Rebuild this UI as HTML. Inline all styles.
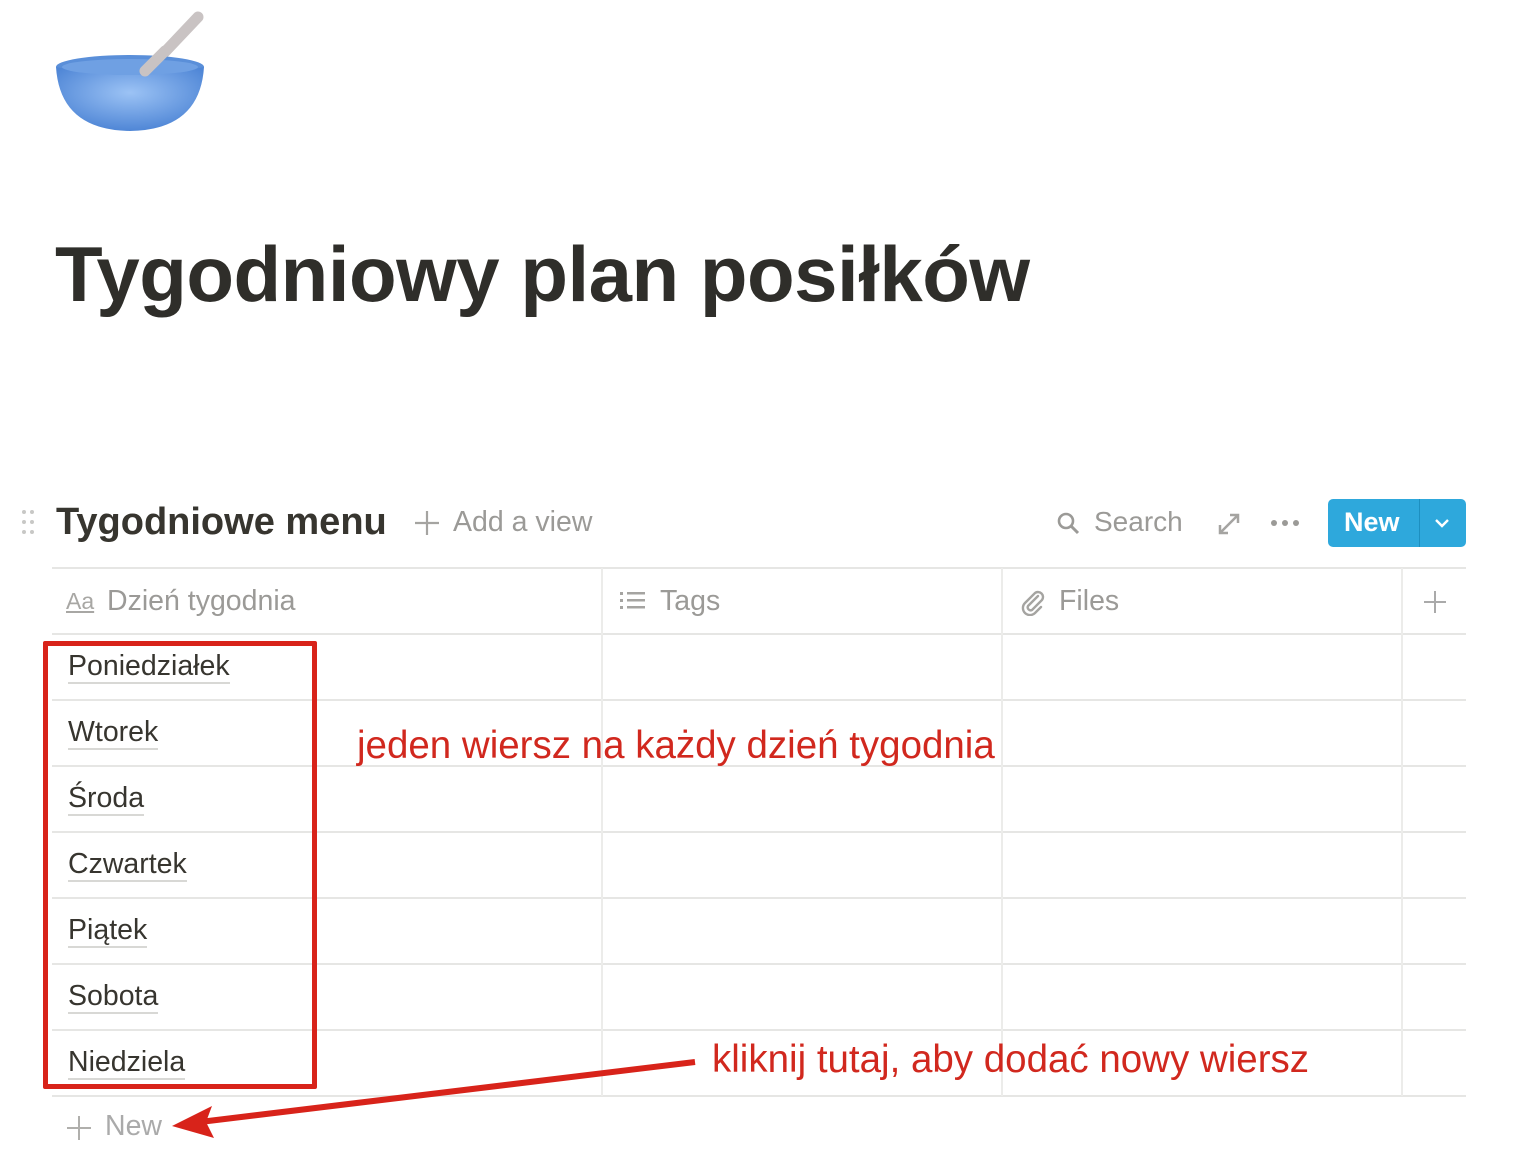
<!DOCTYPE html>
<html><head><meta charset="utf-8"><style>
body{margin:0;width:1524px;height:1154px;background:#fff;font-family:"Liberation Sans",sans-serif;position:relative;overflow:hidden;color:#37352f}
.a{position:absolute;white-space:nowrap}
.hl{position:absolute;left:52px;width:1414px;height:2px;background:#e6e6e4}
.vl{position:absolute;width:2px;background:#ececea;top:568px;height:528px}
.day{position:absolute;left:68px;font-size:28.5px;color:#37352f;border-bottom:2px solid #d8d8d5;line-height:31px}
.gray{color:#9b9a97}
.red{color:#d1281e}
</style></head><body>
<svg class="a" style="left:50px;top:5px" width="160" height="130" viewBox="0 0 160 130">
<defs><radialGradient id="g" cx="50%" cy="40%" r="60%"><stop offset="0" stop-color="#9cc3f5"/><stop offset="1" stop-color="#4f86d6"/></radialGradient></defs>
<line x1="95" y1="68" x2="148" y2="12" stroke="#c9c3c3" stroke-width="11" stroke-linecap="round"/>
<ellipse cx="80" cy="62" rx="74" ry="12" fill="#5a8fd9"/>
<path d="M6 62 Q10 125 80 126 Q150 125 154 62 Q80 78 6 62Z" fill="url(#g)"/>
<ellipse cx="80" cy="62" rx="68" ry="8" fill="#6fa0e3"/>
<line x1="95" y1="66" x2="115" y2="46" stroke="#c9c3c3" stroke-width="11" stroke-linecap="round"/>
</svg>
<div class="a" style="left:55px;top:229px;font-size:78px;font-weight:bold;letter-spacing:-0.5px;color:#2f2e2a">Tygodniowy plan posiłków</div>
<svg class="a" style="left:20px;top:509px" width="16" height="28"><g fill="#c8c8c6"><circle cx="4" cy="3" r="2"/><circle cx="12" cy="3" r="2"/><circle cx="4" cy="13" r="2"/><circle cx="12" cy="13" r="2"/><circle cx="4" cy="23" r="2"/><circle cx="12" cy="23" r="2"/></g></svg>
<div class="a" style="left:56px;top:501px;font-size:38px;font-weight:bold;color:#37352f">Tygodniowe menu</div>
<svg class="a" style="left:414px;top:510px" width="26" height="26"><path d="M13 1v24M1 13h24" stroke="#a5a4a1" stroke-width="2.2"/></svg>
<div class="a gray" style="left:453px;top:506px;font-size:28.5px">Add a view</div>
<svg class="a" style="left:1056px;top:511px" width="26" height="26"><circle cx="10" cy="10" r="7" fill="none" stroke="#9b9a97" stroke-width="2.6"/><line x1="15" y1="15" x2="22" y2="22" stroke="#9b9a97" stroke-width="3"/></svg>
<div class="a gray" style="left:1094px;top:506px;font-size:28px">Search</div>
<svg class="a" style="left:1217px;top:512px" width="24" height="24"><path d="M3 21L21 3M13 3h8v8M3 13v8h8" fill="none" stroke="#a5a4a1" stroke-width="2.5"/></svg>
<svg class="a" style="left:1270px;top:519px" width="30" height="8"><g fill="#9b9a97"><circle cx="4" cy="4" r="3"/><circle cx="15" cy="4" r="3"/><circle cx="26" cy="4" r="3"/></g></svg>
<div class="a" style="left:1328px;top:499px;width:138px;height:48px;background:#2ea8dc;border-radius:5px"></div>
<div class="a" style="left:1419px;top:499px;width:1px;height:48px;background:#1d8fc0"></div>
<div class="a" style="left:1344px;top:507px;font-size:27px;font-weight:bold;color:#fff">New</div>
<svg class="a" style="left:1434px;top:517px" width="16" height="12"><path d="M2 3l6 6 6-6" fill="none" stroke="#fff" stroke-width="2.4"/></svg>
<div class="hl" style="top:567px"></div>
<div class="hl" style="top:633px"></div>
<div class="hl" style="top:699px"></div>
<div class="hl" style="top:765px"></div>
<div class="hl" style="top:831px"></div>
<div class="hl" style="top:897px"></div>
<div class="hl" style="top:963px"></div>
<div class="hl" style="top:1029px"></div>
<div class="hl" style="top:1095px"></div>
<div class="vl" style="left:601px"></div>
<div class="vl" style="left:1001px"></div>
<div class="vl" style="left:1401px"></div>
<div class="a gray" style="left:66px;top:588px;font-size:23px;text-decoration:underline;color:#a8a7a4">Aa</div>
<div class="a gray" style="left:107px;top:585px;font-size:28.5px">Dzień tygodnia</div>
<svg class="a" style="left:620px;top:590px" width="26" height="22"><g fill="#a5a4a1"><rect x="0" y="2" width="3" height="3"/><rect x="0" y="9" width="3" height="3"/><rect x="0" y="16" width="3" height="3"/><rect x="7" y="2" width="18" height="2.5"/><rect x="7" y="9" width="18" height="2.5"/><rect x="7" y="16" width="18" height="2.5"/></g></svg>
<div class="a gray" style="left:660px;top:585px;font-size:28.5px">Tags</div>
<svg class="a" style="left:1020px;top:588px" width="26" height="28"><path d="M18 8L8 18a3 3 0 0 0 4 4L22 12a5 5 0 0 0-7-7L5 15a7 7 0 0 0 10 10l6-6" fill="none" stroke="#a5a4a1" stroke-width="2.4" stroke-linecap="round"/></svg>
<div class="a gray" style="left:1059px;top:585px;font-size:28.5px">Files</div>
<svg class="a" style="left:1423px;top:590px" width="24" height="24"><path d="M12 1v22M1 12h22" stroke="#aaa" stroke-width="2"/></svg>
<div class="day" style="top:651px">Poniedziałek</div>
<div class="day" style="top:717px">Wtorek</div>
<div class="day" style="top:783px">Środa</div>
<div class="day" style="top:849px">Czwartek</div>
<div class="day" style="top:915px">Piątek</div>
<div class="day" style="top:981px">Sobota</div>
<div class="day" style="top:1047px">Niedziela</div>
<svg class="a" style="left:66px;top:1115px" width="26" height="26"><path d="M13 1v24M1 13h24" stroke="#b0afac" stroke-width="2"/></svg>
<div class="a gray" style="left:105px;top:1110px;font-size:28.5px;color:#aaa">New</div>
<div class="a" style="left:43px;top:641px;width:264px;height:438px;border:5px solid #d8231a;border-radius:2px"></div>
<div class="a red" style="left:357px;top:724px;font-size:38.5px">jeden wiersz na każdy dzień tygodnia</div>
<div class="a red" style="left:712px;top:1038px;font-size:38.5px">kliknij tutaj, aby dodać nowy wiersz</div>
<svg class="a" style="left:0;top:0" width="1524" height="1154"><line x1="695" y1="1062" x2="200" y2="1122" stroke="#d8231a" stroke-width="6"/><path d="M172 1126L212 1106L206 1122L214 1138Z" fill="#d8231a"/></svg>
</body></html>
